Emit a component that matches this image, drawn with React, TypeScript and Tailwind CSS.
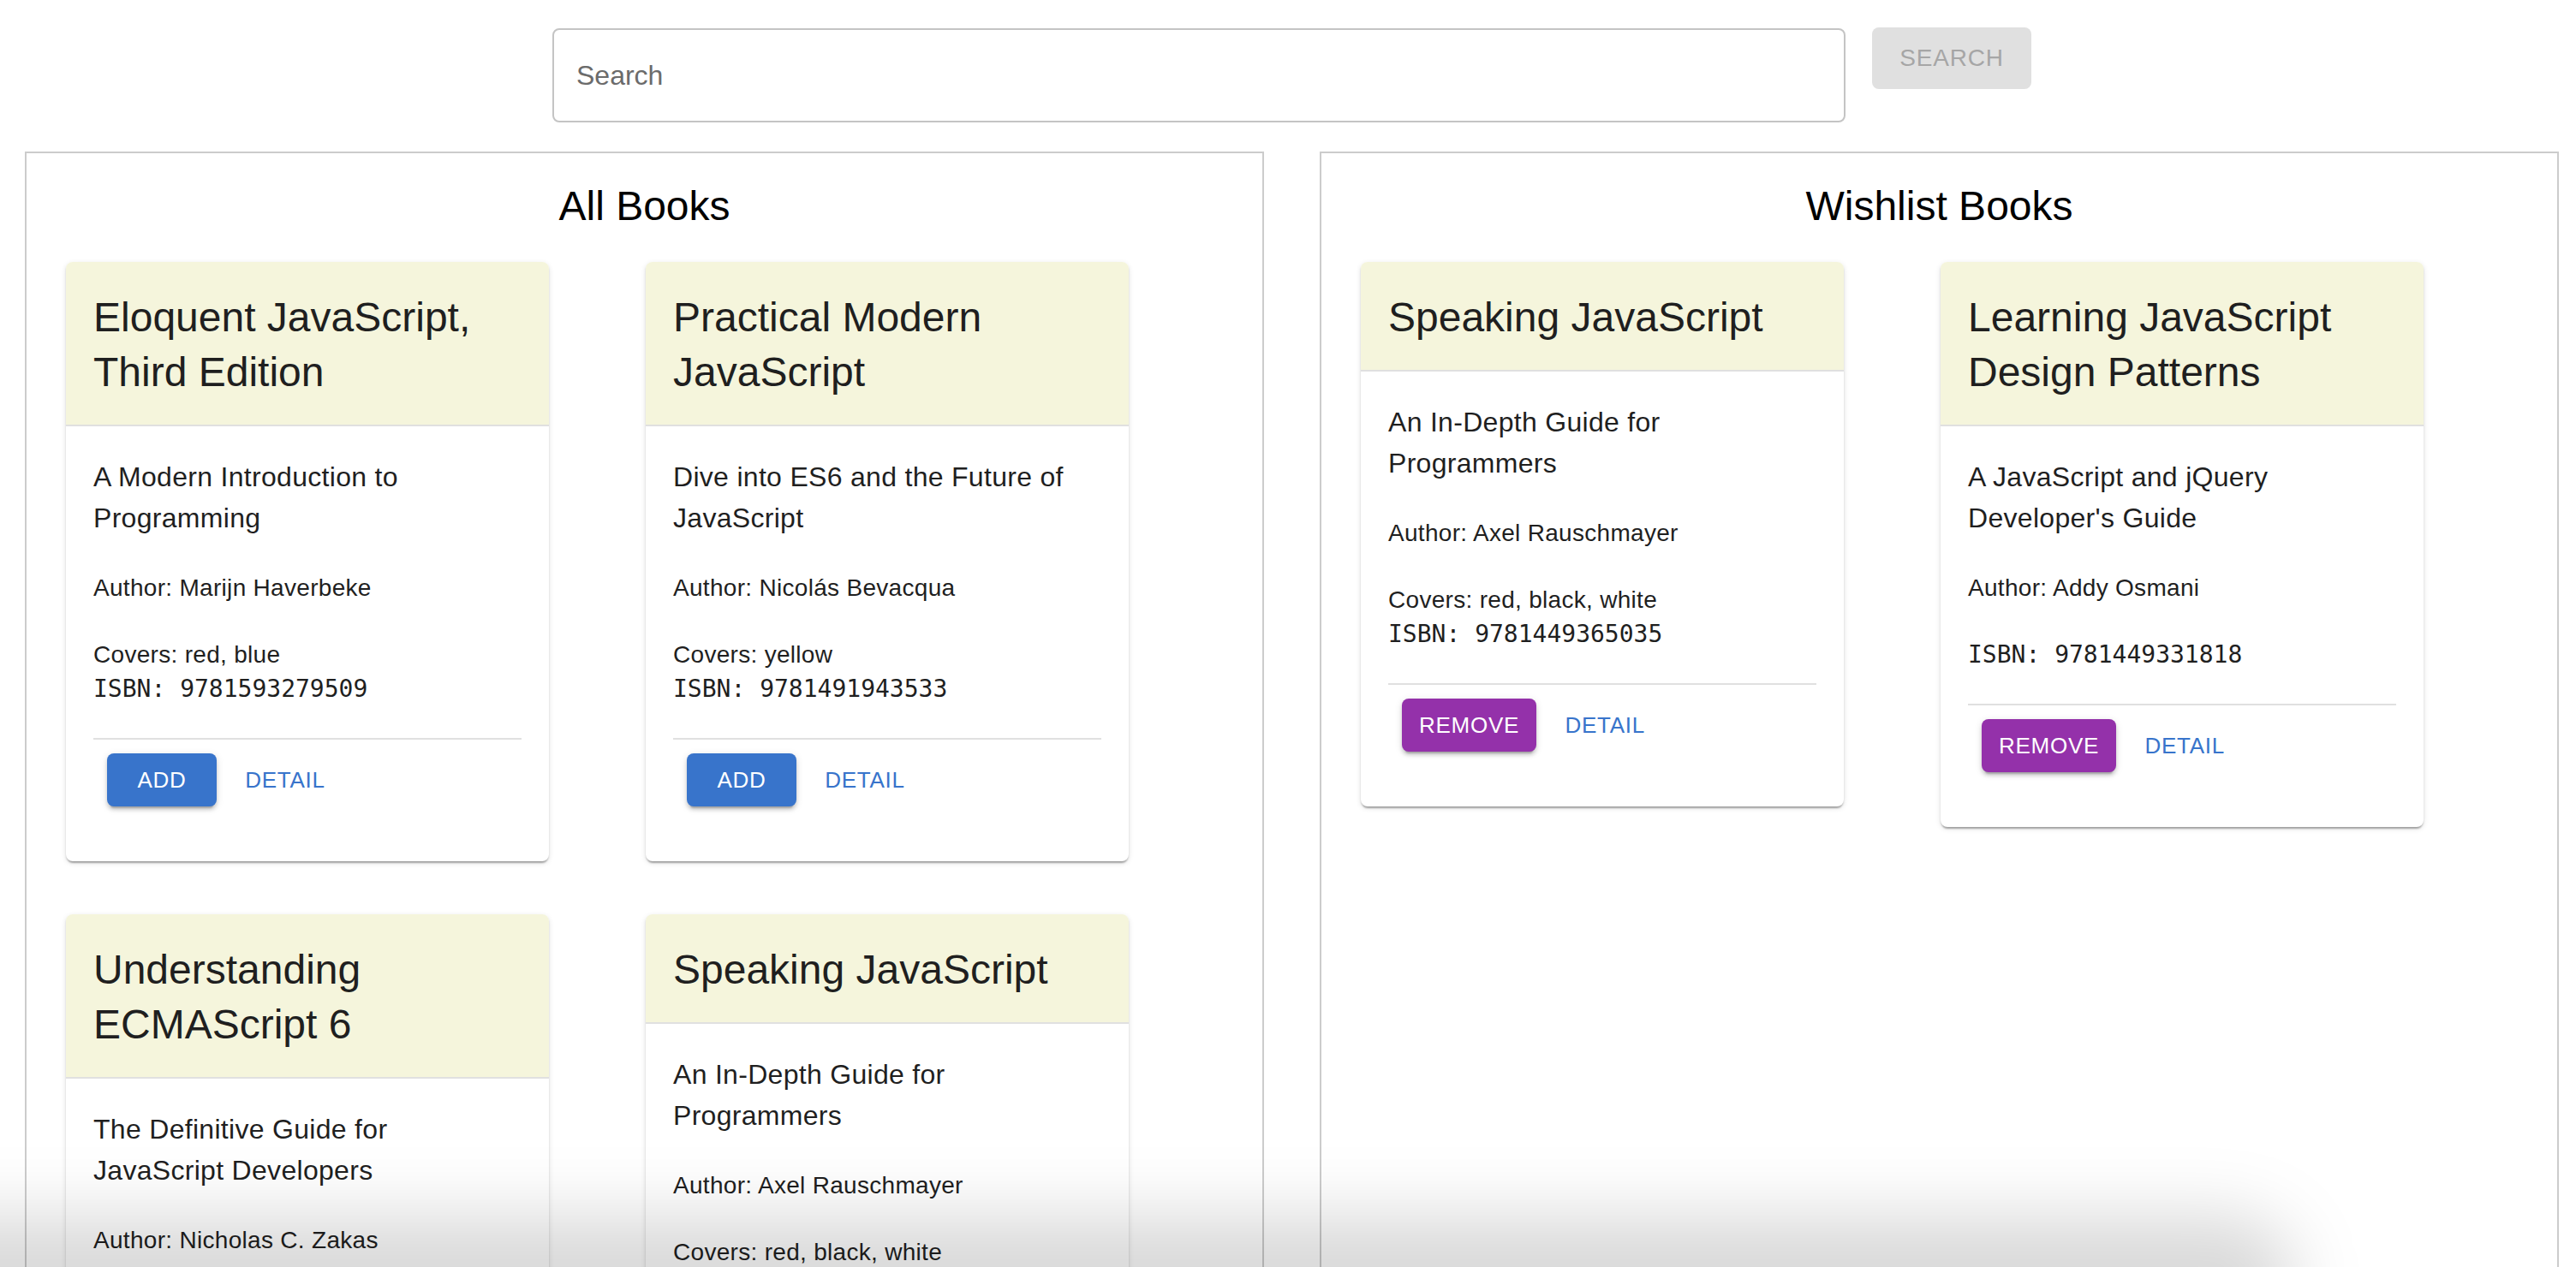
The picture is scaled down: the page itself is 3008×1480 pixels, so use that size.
import React from "react";

// Book list page — search bar on top, two bordered panels (all books / wishlist)

type Book = {
  title: string;
  subtitle: string;
  author: string;
  covers?: string;
  isbn: string;
};

const ALL_BOOKS: Book[] = [
  { title: "Eloquent JavaScript, Third Edition", subtitle: "A Modern Introduction to Programming", author: "Marijn Haverbeke", covers: "red, blue", isbn: "9781593279509" },
  { title: "Practical Modern JavaScript", subtitle: "Dive into ES6 and the Future of JavaScript", author: "Nicolás Bevacqua", covers: "yellow", isbn: "9781491943533" },
  { title: "Understanding ECMAScript 6", subtitle: "The Definitive Guide for JavaScript Developers", author: "Nicholas C. Zakas", covers: "green", isbn: "9781593277574" },
  { title: "Speaking JavaScript", subtitle: "An In-Depth Guide for Programmers", author: "Axel Rauschmayer", covers: "red, black, white", isbn: "9781449365035" },
];

const WISHLIST: Book[] = [
  { title: "Speaking JavaScript", subtitle: "An In-Depth Guide for Programmers", author: "Axel Rauschmayer", covers: "red, black, white", isbn: "9781449365035" },
  { title: "Learning JavaScript Design Patterns", subtitle: "A JavaScript and jQuery Developer's Guide", author: "Addy Osmani", isbn: "9781449331818" },
];

const SANS = "font-['Liberation_Sans',Arial,sans-serif]";

function BookCard({ book, action }: { book: Book; action: "add" | "remove" }) {
  return (
    <div className="w-[564px] rounded-[8px] bg-white overflow-hidden shadow-[0_4px_2px_-2px_rgba(0,0,0,0.2),0_2px_2px_0_rgba(0,0,0,0.14),0_2px_6px_0_rgba(0,0,0,0.12)]">
      {/* cabeçalho */}
      <div className="bg-[#f5f5dc] pt-[33px] pb-[29px] px-[32px] border-b-2 border-[#e0e0e0]">
        <h2 className="text-[48px] leading-[64px] text-[#1f1f1f]">{book.title}</h2>
      </div>
      {/* conteúdo */}
      <div className="px-[32px] pt-[35px] pb-[48px] text-[#1f1f1f]">
        <p className="text-[32px] leading-[48px] tracking-[0.3px] mb-[38px]">{book.subtitle}</p>
        <p className="text-[28px] leading-[40px] tracking-[0.3px] mb-[38px]">Author: {book.author}</p>
        {book.covers && <p className="text-[28px] leading-[40px] tracking-[0.3px]">Covers: {book.covers}</p>}
        <p className="font-['DejaVu_Sans_Mono',monospace] text-[28px] leading-[40px] mb-[37px]">ISBN: {book.isbn}</p>
        <div className="h-[2px] bg-[#e0e0e0]" />
        <div className="flex items-center gap-[16px] p-[16px]">
          {action === "add" ? (
            <button className="h-[62px] min-w-[128px] px-[20px] rounded-[8px] bg-[#3874cb] text-white text-[26px] tracking-[0.75px] shadow-[0_6px_2px_-4px_rgba(0,0,0,0.2),0_4px_4px_0_rgba(0,0,0,0.14),0_2px_10px_0_rgba(0,0,0,0.12)]">
              ADD
            </button>
          ) : (
            <button className="h-[62px] min-w-[128px] px-[20px] rounded-[8px] bg-[#9431aa] text-white text-[26px] tracking-[0.75px] shadow-[0_6px_2px_-4px_rgba(0,0,0,0.2),0_4px_4px_0_rgba(0,0,0,0.14),0_2px_10px_0_rgba(0,0,0,0.12)]">
              REMOVE
            </button>
          )}
          <button className="h-[62px] min-w-[128px] px-[10px] rounded-[8px] text-[#3874cb] text-[26px] tracking-[0.75px]">
            DETAIL
          </button>
        </div>
      </div>
    </div>
  );
}

function Panel({ title, books, action }: { title: string; books: Book[]; action: "add" | "remove" }) {
  return (
    <section className="w-[1447px] shrink-0 border-2 border-[#cccccc] pt-[30px] px-[46px] pb-[48px]">
      <h1 className="text-[48px] leading-[64px] text-black text-center mb-[33px]">{title}</h1>
      <div className="flex flex-wrap gap-x-[113px] gap-y-[62px] items-start">
        {books.map((b, i) => (
          <BookCard key={i} book={b} action={action} />
        ))}
      </div>
    </section>
  );
}

export default function App() {
  return (
    <div className={`relative h-screen overflow-hidden bg-white ${SANS}`}>
      {/* busca */}
      <div className="flex items-start gap-[31px] pl-[645px] pt-[33px]">
        <div className="w-[1510px] h-[110px] border-2 border-[#c4c4c4] rounded-[8px] flex items-center px-[26px]">
          <input
            placeholder="Search"
            className="w-full bg-transparent outline-none text-[32px] text-[#212121] placeholder:text-[#6b6b6b]"
          />
        </div>
        <button disabled className="-mt-px w-[186px] h-[72px] rounded-[8px] bg-[#e0e0e0] text-[#a6a6a6] text-[28px] tracking-[0.8px]">
          SEARCH
        </button>
      </div>

      {/* painéis */}
      <div className="flex gap-[65px] pl-[29px] pt-[34px]">
        <Panel title="All Books" books={ALL_BOOKS} action="add" />
        <Panel title="Wishlist Books" books={WISHLIST} action="remove" />
      </div>

      {/* sombra da base */}
      <div className="pointer-events-none absolute left-[-200px] bottom-[-90px] w-[2880px] h-[150px] rounded-full bg-black/15 blur-[40px]" />
    </div>
  );
}
